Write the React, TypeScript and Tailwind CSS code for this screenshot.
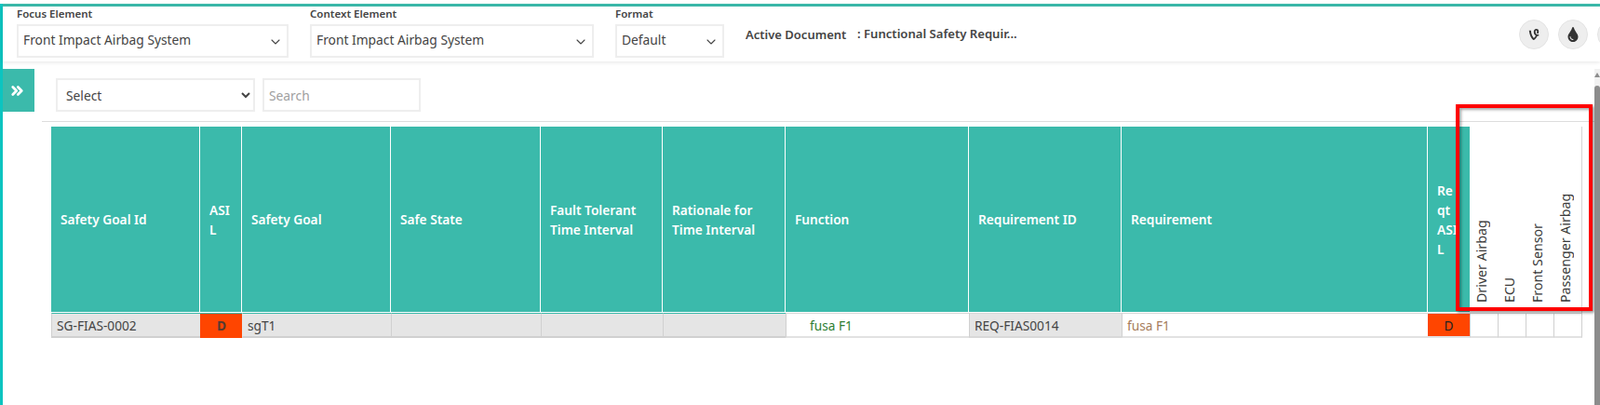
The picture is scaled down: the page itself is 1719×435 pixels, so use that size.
import { ChevronDown, ChevronsRight } from "lucide-react";
import { FaTint, FaVine } from "react-icons/fa";

const font = "font-['Open_Sans',sans-serif]";

const columns = [
  { title: "Safety Goal Id", width: "w-[160px]" },
  { title: "Safety Goal", width: "w-[160px]" },
  { title: "Safe State", width: "w-[161px]" },
  { title: "Fault Tolerant Time Interval", width: "w-[131px]" },
  { title: "Rationale for Time Interval", width: "w-[132px]" },
  { title: "Function", width: "w-[197px]" },
  { title: "Requirement ID", width: "w-[164px]" },
  { title: "Requirement", width: "w-[329px]" },
];

const rotated = ["Driver Airbag", "ECU", "Front Sensor", "Passenger Airbag"];

function TopSelect({ label, value, width }: { label: string; value: string; width: string }) {
  return (
    <div className={width}>
      <label className="block h-[22px] text-[11.5px] leading-[22px] font-semibold text-[#444]">{label}</label>
      <div className="relative">
        <select className="h-[36px] w-full appearance-none border-2 border-[#eeeeee] bg-white pb-[1px] pl-[5px] text-[13.8px] text-[#444] outline-none">
          <option>{value}</option>
        </select>
        <ChevronDown className="absolute top-[11px] right-[6px] text-[#444]" size={16} strokeWidth={1.6} />
      </div>
    </div>
  );
}

function RoundButton({ children, className }: { children?: React.ReactNode; className: string }) {
  return (
    <div className={`absolute top-[21px] flex h-[32px] w-[32px] items-center justify-center rounded-full border border-[#e4e4e4] bg-[#eeeeee] text-[#333] ${className}`}>
      {children}
    </div>
  );
}

const th = "border-r border-b border-white bg-[#3bbaab] pl-[10px] text-left text-[13.7px] leading-[21px] font-semibold text-white";
const cell = "border-t border-b-2 border-l pt-[2px]";
const grey = "border-t-[#3bbaab] border-b-[#d0d0d0] border-l-[#d0d0d0] bg-[#e5e5e5]";
const plain = "border-t-[#d8d8d8] border-b-[#e2e2e2] border-l-[#d0d0d0] bg-white";

export default function App() {
  return (
    <div className={`relative h-[435px] w-[1719px] overflow-hidden bg-white ${font}`}>
      <div className="absolute top-[4px] left-0 h-[3px] w-full bg-[#3bbaab]" />
      <div className="absolute top-[4px] left-0 h-[431px] w-[3px] bg-[#0cc4c0]" />

      {/* top filter bar */}
      <div className="absolute top-[7px] left-[3px] h-[59px] w-[1716px] bg-white shadow-[0_1px_4px_rgba(0,0,0,0.1)]" />
      <div className="absolute top-[4px] left-[18px] flex">
        <TopSelect label="Focus Element" value="Front Impact Airbag System" width="w-[292px]" />
        <div className="w-[23px]" />
        <TopSelect label="Context Element" value="Front Impact Airbag System" width="w-[305px]" />
        <div className="w-[23px]" />
        <TopSelect label="Format" value="Default" width="w-[117px]" />
      </div>
      <span className="absolute top-[28px] left-[801px] text-[13px] leading-[18px] font-semibold text-[#444]">Active Document</span>
      <span className="absolute top-[27px] left-[921px] text-[13.1px] leading-[18px] font-semibold text-[#444]">: Functional Safety Requir...</span>
      <RoundButton className="left-[1632px]"><FaVine size={14} /></RoundButton>
      <RoundButton className="left-[1674px]"><FaTint size={16} /></RoundButton>
      <RoundButton className="left-[1716px]" />

      {/* expand button */}
      <div className="absolute top-[74px] left-[3px] flex h-[46px] w-[34px] items-center justify-center bg-[#3bbaab] text-white">
        <ChevronsRight size={19} strokeWidth={3.5} className="-ml-[3px]" />
      </div>

      <select className="absolute top-[84px] left-[60px] h-[36px] w-[214px] border-2 border-[#eeeeee] bg-white pl-[5px] text-[13.8px] text-[#444] outline-none">
        <option>Select</option>
      </select>
      <input
        placeholder="Search"
        className="absolute top-[84px] left-[282px] h-[36px] w-[170px] border-2 border-[#eeeeee] bg-white pl-[5px] text-[13.8px] outline-none placeholder:text-[#a0a0a0]"
      />

      <div className="absolute top-[130px] left-[45px] h-[1px] w-[1668px] bg-[#dddddd]" />

      <table className="absolute top-[136px] left-[55px] w-[1644px] table-fixed border-separate border-spacing-0">
        <thead>
          <tr className="h-[200px]">
            <th className={`${columns[0].width} ${th}`}>{columns[0].title}</th>
            <th className={`w-[45px] ${th}`}>
              <div className="w-[24px] break-all">ASIL</div>
            </th>
            {columns.slice(1).map((c) => (
              <th key={c.title} className={`${c.width} ${th}`}>
                {c.title}
              </th>
            ))}
            <th className="w-[45px] border-b border-white bg-[#3bbaab] pl-[10px] text-left text-[13.7px] leading-[21px] font-semibold text-white">
              <div className="w-[24px] break-all">Reqt ASIL</div>
            </th>
            {rotated.map((name, i) => (
              <th key={name} className={`relative ${i === 3 ? "w-[31px] border-r border-[#d4d4d4]" : "w-[30px]"} bg-white p-0 align-bottom`}>
                {i < 3 && <span className="absolute top-0 -right-[1px] h-[2px] w-[1px] bg-[#cccccc]" />}
                <div className="mb-[11px] ml-[3.5px] h-[180px] w-[18px] text-left text-[14.2px] leading-[18px] font-normal text-[#3a3a3a] [transform:rotate(180deg)] [writing-mode:vertical-rl]">
                  {name}
                </div>
              </th>
            ))}
          </tr>
        </thead>
        <tbody>
          <tr className="h-[27px] text-[13.7px] text-[#444]">
            <td className={`${cell} ${grey} pl-[5px]`}>SG-FIAS-0002</td>
            <td className="border-t border-b-2 border-t-[#3bbaab] border-b-[#ff4500] bg-[#ff4500] pt-[2px] pl-[1px] text-center font-bold text-[#553a30]">D</td>
            <td className={`${cell} ${grey} border-l-[#e5e5e5] pl-[5px]`}>sgT1</td>
            <td className={`${cell} ${grey}`} />
            <td className={`${cell} ${grey}`} />
            <td className={`${cell} ${grey}`} />
            <td className={`${cell} ${plain} pl-[25px] text-[#2e7d32]`}>fusa F1</td>
            <td className={`${cell} border-t-[#d8d8d8] border-b-[#d8d8d8] border-l-[#d0d0d0] bg-[#e5e5e5] pl-[5px]`}>REQ-FIAS0014</td>
            <td className={`${cell} ${plain} pl-[5px] text-[#a67c5b]`}>fusa F1</td>
            <td className="border-t border-b-2 border-t-[#d8d8d8] border-b-[#e2e2e2] bg-[#ff4500] pt-[2px] text-center text-[#222]">D</td>
            {rotated.map((name, i) => (
              <td key={name} className={`${cell} ${plain} ${i === 3 ? "border-r border-r-[#d0d0d0]" : ""}`} />
            ))}
          </tr>
        </tbody>
      </table>

      {/* annotation drawn over the screenshot */}
      <div className="absolute top-[112px] left-[1564px] h-[222px] w-[147px] border-[4px] border-[#ff0000] shadow-[2px_2px_3px_rgba(0,0,0,0.4),inset_2px_2px_3px_rgba(0,0,0,0.35)]" />

      {/* scrollbar */}
      <div className="absolute top-[74px] left-[1713px] h-[361px] w-[6px] bg-[#f1f1f1]">
        <div className="mx-auto mt-[4px] h-0 w-0 border-x-[3px] border-b-[5px] border-x-transparent border-b-[#8c8c8c]" />
        <div className="absolute top-[18px] left-0 h-[343px] w-full rounded-t-[3px] bg-[#8c8c8c]" />
      </div>
    </div>
  );
}
